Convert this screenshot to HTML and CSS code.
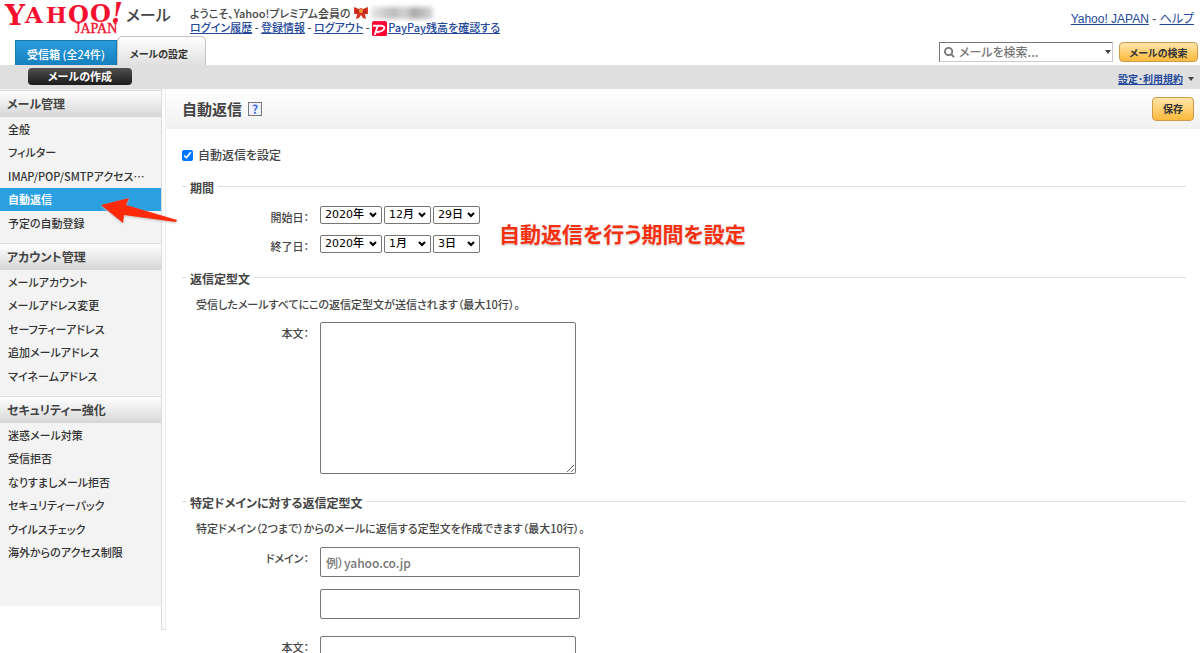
FILE: index.html
```html
<!DOCTYPE html>
<html lang="ja">
<head>
<meta charset="utf-8">
<title>自動返信 - Yahoo!メール</title>
<link rel="stylesheet" href="styles.css">
</head>
<body>
<header class="masthead">
  <div class="brand">
    <svg class="logo" viewBox="0 0 118 32" role="img" aria-label="Yahoo! JAPAN">
      <g class="logo-text">
        <text class="logo-y" x="0" y="22">Y</text>
        <text class="logo-a" x="20" y="20">A</text>
        <text class="logo-h" x="41" y="20">H</text>
        <text class="logo-o" x="63" y="20">O</text>
        <text class="logo-o" x="85" y="19">O</text>
        <text class="logo-x" x="106" y="20">!</text>
        <text class="logo-j" x="70" y="30">JAPAN</text>
      </g>
    </svg>
    <span class="product">メール</span>
  </div>
  <div class="account">
    <div class="welcome">ようこそ、Yahoo!プレミアム会員の
      <svg class="ribbon" viewBox="0 0 14 12" aria-hidden="true"><path fill="#d83222" d="M0 0l5 2 2-1 2 1 5-2v7l-3 0 1 5-3-1-2-3-2 3-3 1 1-5-3 0z"/><path fill="#a3261b" d="M2 3l3 1v1L2 6zM12 3L9 4v1l3 1z"/><circle cx="7" cy="4" r="2" fill="#f39b35"/></svg><span class="masked" aria-hidden="true"></span>
    </div>
    <nav class="account-links"><a href="#">ログイン履歴</a> - <a href="#">登録情報</a> - <a href="#">ログアウト</a> - <a href="#"><svg class="pp" viewBox="0 0 16 16" aria-hidden="true"><rect width="16" height="16" rx="2" fill="#ff0033"/><path d="M3 15L6 5M1 5h8q5 0 4 3t-8 4" fill="none" stroke="#fff" stroke-width="2"/></svg>PayPay残高を確認する</a></nav>
  </div>
  <nav class="top-links"><a href="#">Yahoo! JAPAN</a> - <a href="#">ヘルプ</a></nav>
</header>
<div class="tabs-row">
  <nav class="tabs"><a class="tab inbox" href="#"><b>受信箱</b>&nbsp;(全24件)</a><a class="tab current" href="#">メールの設定</a></nav>
  <form class="search">
    <div class="search-box">
      <svg class="glass" viewBox="0 0 12 12" aria-hidden="true"><circle cx="5" cy="5" r="4"/><path d="M8 8l3 3"/></svg>
      <input type="text" aria-label="メールを検索" placeholder="メールを検索...">
      <span class="caret"></span>
    </div>
    <button class="gold find" type="button">メールの検索</button>
  </form>
</div>
<div class="toolbar">
  <button class="compose" type="button">メールの作成</button>
  <div class="terms"><a href="#">設定･利用規約</a><span class="caret"></span></div>
</div>
<div class="columns">
  <aside class="side">
    <nav class="side-nav">
      <h2>メール管理</h2>
      <ul>
        <li><a href="#">全般</a></li>
        <li><a href="#">フィルター</a></li>
        <li><a href="#">IMAP/POP/SMTPアクセス…</a></li>
        <li><a class="active" href="#">自動返信</a></li>
        <li><a href="#">予定の自動登録</a></li>
      </ul>
      <h2>アカウント管理</h2>
      <ul>
        <li><a href="#">メールアカウント</a></li>
        <li><a href="#">メールアドレス変更</a></li>
        <li><a href="#">セーフティーアドレス</a></li>
        <li><a href="#">追加メールアドレス</a></li>
        <li><a href="#">マイネームアドレス</a></li>
      </ul>
      <h2>セキュリティー強化</h2>
      <ul>
        <li><a href="#">迷惑メール対策</a></li>
        <li><a href="#">受信拒否</a></li>
        <li><a href="#">なりすましメール拒否</a></li>
        <li><a href="#">セキュリティーパック</a></li>
        <li><a href="#">ウイルスチェック</a></li>
        <li><a href="#">海外からのアクセス制限</a></li>
      </ul>
    </nav>
    <div class="splitter"></div>
    <svg class="arrow" viewBox="0 0 78 27" aria-hidden="true"><path fill="#ff2a0a" d="M0 8L28 1 25 8 76 23 75 25 23 18 22 26z"/></svg>
  </aside>
  <main class="content">
    <div class="page-head">
      <h1>自動返信</h1><a class="help" href="#" aria-label="ヘルプ">?</a>
      <button class="gold save" type="button">保存</button>
    </div>
    <form class="settings">
      <label class="enable"><input type="checkbox" checked>自動返信を設定</label>
      <fieldset class="period">
        <legend>期間</legend>
        <div class="row">
          <span class="label">開始日：</span>
          <div class="dates">
            <select class="year" aria-label="開始年"><option>2020年</option></select>
            <select class="part" aria-label="開始月"><option>12月</option></select>
            <select class="part" aria-label="開始日"><option>29日</option></select>
          </div>
        </div>
        <div class="row">
          <span class="label">終了日：</span>
          <div class="dates">
            <select class="year" aria-label="終了年"><option>2020年</option></select>
            <select class="part" aria-label="終了月"><option>1月</option></select>
            <select class="part" aria-label="終了日"><option>3日</option></select>
          </div>
        </div>
        <p class="callout">自動返信を行う期間を設定</p>
      </fieldset>
      <fieldset class="reply">
        <legend>返信定型文</legend>
        <p class="note">受信したメールすべてにこの返信定型文が送信されます（最大10行）。</p>
        <div class="row">
          <label class="label" for="body">本文：</label>
          <textarea id="body"></textarea>
        </div>
      </fieldset>
      <fieldset class="domain">
        <legend>特定ドメインに対する返信定型文</legend>
        <p class="note">特定ドメイン（2つまで）からのメールに返信する定型文を作成できます（最大10行）。</p>
        <div class="row">
          <label class="label" for="domain1">ドメイン：</label>
          <div class="inputs">
            <input id="domain1" type="text" placeholder="例）yahoo.co.jp">
            <input type="text" aria-label="ドメイン2">
          </div>
        </div>
        <div class="row">
          <label class="label" for="body2">本文：</label>
          <textarea id="body2"></textarea>
        </div>
      </fieldset>
    </form>
  </main>
</div>
</body>
</html>
```
FILE: styles.css
```css
* { box-sizing: border-box; }
html { height: 100%; overflow: hidden; }
body {
  margin: 0;
  height: 100%;
  overflow: hidden;
  background: #fff;
  color: #444;
  font: 500 12px/14px "Noto Sans CJK JP", sans-serif;
  font-feature-settings: "palt";
}
a { color: #24489a; }
button, input, select, textarea { font: inherit; font-feature-settings: inherit; margin: 0; }
h1, h2, p, ul { margin: 0; padding: 0; }
ul { list-style: none; }

.masthead { display: flex; height: 37px; }
.brand { display: flex; width: 190px; padding: 3px 0 0 5px; gap: 3px; flex: none; }
.logo { width: 118px; height: 32px; overflow: visible; }
.logo-text { fill: #f5102f; font-family: "DejaVu Serif", serif; font-weight: 700; font-feature-settings: normal; }
.logo-y { font-size: 28px; }
.logo-a { font-size: 23px; }
.logo-h { font-size: 22px; }
.logo-o { font-size: 24px; }
.logo-x { font-size: 27px; font-style: italic; }
.logo-j { font-family: "Liberation Serif", serif; font-size: 14px; font-weight: 400; stroke: #f5102f; stroke-width: 0.4px; }
.product { font-size: 16px; line-height: 22px; font-weight: 500; }
.account { flex: 1; padding-top: 6px; font-size: 11px; }
.welcome { display: flex; align-items: center; gap: 3px; }
.ribbon { width: 14px; height: 12px; }
.masked {
  width: 62px;
  height: 12px;
  background: linear-gradient(90deg, #e8e8e8, #bdbdbd 35%, #d2d2d2 55%, #a9a9a9 70%, #d6d6d6);
  filter: blur(2px);
}
.account-links { display: block; white-space: nowrap; }
.pp { width: 15px; height: 15px; margin-right: 1px; vertical-align: -4px; }
.top-links { padding: 12px 6px 0 0; font-family: "Liberation Sans", "Noto Sans CJK JP", sans-serif; font-weight: 400; }

.tabs-row { display: flex; justify-content: space-between; height: 28px; }
.tabs { display: flex; align-items: flex-end; padding-left: 15px; }
.tab { display: flex; align-items: center; justify-content: center; text-decoration: none; font-size: 11px; }
.inbox { width: 102px; height: 25px; padding-top: 1px; color: #fff; background: linear-gradient(#2c9ce0, #1580bd); border: 1px solid #1878b0; border-bottom: 0; }
.current {
  width: 89px;
  height: 29px;
  padding: 5px 5px 0 0;
  color: #333;
  font-size: 10px;
  font-weight: 700;
  background: linear-gradient(#fff, #e0e0e0);
  border: 1px solid #c4c4c4;
  border-bottom: 0;
  border-radius: 5px 5px 0 0;
}
.search { display: flex; align-items: center; gap: 6px; padding: 2px 2px 0 0; }
.search-box { display: flex; align-items: center; width: 174px; height: 20px; padding: 0 1px 0 4px; border: 1px solid; border-color: #777 #ccc #ccc #777; }
.glass { width: 11px; height: 11px; flex: none; fill: none; stroke: #777; stroke-width: 2; }
.search-box input { flex: 1; min-width: 0; border: 0; padding: 0 4px; background: none; outline: 0; }
.search-box input::placeholder { color: #777; opacity: 1; }
.caret { border: 3px solid transparent; border-top: 4px solid #444; border-bottom: 0; }
.gold {
  padding: 0;
  color: #333;
  font-size: 10px;
  font-weight: 700;
  background: linear-gradient(#ffe6ab, #fcba3c);
  border: 1px solid #cf9a4a;
  border-radius: 4px;
}
.find { width: 79px; height: 20px; padding-top: 2px; }

.toolbar { display: flex; justify-content: space-between; height: 24px; padding: 3px 6px 0 28px; background: #dfdfdf; }
.compose { width: 104px; height: 17px; padding: 0; color: #fff; font-size: 11px; font-weight: 700; line-height: 15px; background: linear-gradient(#505050, #1b1b1b); border: 0; border-radius: 4px; }
.terms { display: flex; align-items: center; gap: 5px; font-size: 10px; font-weight: 700; }

.columns { display: flex; align-items: flex-start; }
.side { position: relative; display: flex; align-items: flex-start; flex: none; }
.side-nav { width: 161px; min-height: 517px; padding-top: 1px; background: #f3f3f3; }
.splitter { align-self: stretch; width: 5px; min-height: 541px; border: 1px solid #ddd; border-top: 0; border-right-color: #eee; background: #fcfcfc; }
.side h2 { height: 27px; padding: 0 7px; border-top: 1px solid #ddd; background: linear-gradient(#fff, #d6d6d6); font-size: 12px; line-height: 26px; }
.side ul { padding-bottom: 8px; }
.side li a { display: block; padding-left: 8px; color: #333; font-size: 11px; line-height: 24px; text-decoration: none; white-space: nowrap; }
.side li:nth-child(even) a { line-height: 23px; }
.side .active { color: #fff; font-weight: 700; background: #2aa0e0; }
.arrow { position: absolute; left: 101px; top: 108px; width: 78px; height: 27px; filter: drop-shadow(0 1px 1px #bbb); }

.content { flex: 1; min-width: 0; }
.page-head { display: flex; align-items: center; height: 40px; padding: 0 6px 0 16px; background: linear-gradient(#fff, #f1f1f1); }
.page-head h1 { font-size: 15px; line-height: 20px; }
.help { display: block; width: 14px; height: 14px; margin-left: 6px; border: 1px solid #777; background: #eef2ff; color: #4a6fe0; font-size: 12px; line-height: 12px; font-weight: 700; text-align: center; text-decoration: none; }
.save { width: 42px; height: 24px; margin-left: auto; }
.settings { padding: 19px 14px 0 16px; }
.enable { display: flex; align-items: center; gap: 5px; }
.enable input { width: 11px; height: 11px; }
fieldset { position: relative; margin: 0; padding: 0; border: 0; border-top: 1px solid #ddd; min-width: 0; }
legend { margin-left: 4px; padding: 4px 4px 0; font-weight: 700; line-height: 14px; }
.row { display: flex; align-items: flex-start; }
.label { flex: none; width: 127px; margin-right: 11px; padding-top: 4px; font-size: 11px; text-align: right; }
.dates { display: flex; gap: 2px; }
select {
  appearance: none;
  height: 18px;
  padding: 0 4px;
  border: 1px solid #767676;
  border-radius: 2px;
  background: #fff url("data:image/svg+xml,%3Csvg xmlns='http://www.w3.org/2000/svg' width='8' height='6'%3E%3Cpath d='M1 1l3 3 3-3' fill='none' stroke='%23000' stroke-width='2'/%3E%3C/svg%3E") no-repeat right 4px center;
  color: #000;
  font-family: "DejaVu Sans", "Noto Sans CJK JP", sans-serif;
  font-size: 11px;
  line-height: 16px;
}
.year { width: 62px; }
.part { width: 47px; }
.period { margin-top: 15px; height: 91px; }
.period .row { height: 29px; }
.period .row:first-of-type { margin-top: 11px; }
.callout { position: absolute; left: 317px; top: 24px; color: #f62f0e; font-size: 21px; font-weight: 700; line-height: 28px; white-space: nowrap; text-shadow: 0 0 2px #fff, 0 1px 2px #aaa; }
.note { padding: 11px 0 0 14px; font-size: 11px; }
.reply { height: 224px; }
textarea { display: block; width: 256px; height: 152px; border: 1px solid #767676; border-radius: 2px; background: #fff; }
.reply .row { margin-top: 11px; }
.domain .row { margin-top: 12px; }
.inputs { display: flex; flex-direction: column; gap: 12px; width: 260px; }
.inputs input { height: 30px; padding: 0 5px; border: 1px solid #767676; border-radius: 2px; background: #fff; }
.inputs input::placeholder { color: #757575; }
.domain .row + .row { margin-top: 17px; }
```
